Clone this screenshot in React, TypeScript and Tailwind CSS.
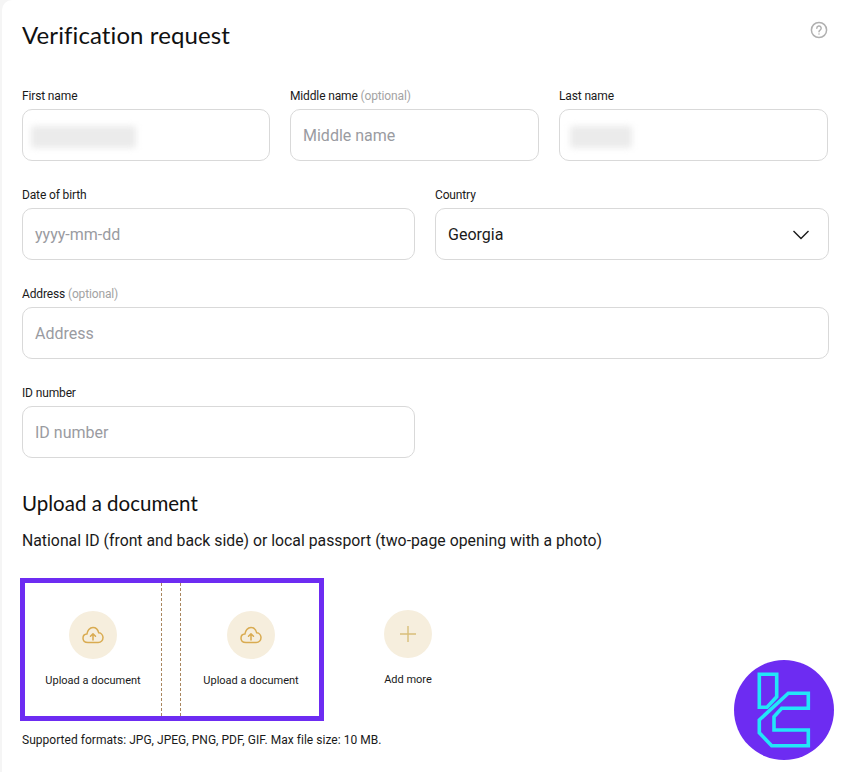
import React from "react";

const font = { fontFamily: "Roboto" };

function Label({ text, optional }: { text: string; optional?: boolean }) {
  return (
    <div className="h-[18px] text-[12px] leading-[18px] tracking-[-0.14px] text-[#1a1a1a] mb-[4px]">
      {text}
      {optional && <span className="text-[#a3a3a3]"> (optional)</span>}
    </div>
  );
}

function Field({ label, optional, placeholder, blur, shift = 0 }: { label: string; optional?: boolean; placeholder?: string; blur?: number; shift?: number }) {
  return (
    <div>
      <Label text={label} optional={optional} />
      <div className="h-[52px] rounded-[10px] border border-[#d9d9d9] bg-white flex items-center px-[12px] text-[16px] leading-[24px] pt-[1px] text-[#9a9ba1]">
        {placeholder}
        {blur && (
          <div className="mt-[3px] h-[22px] rounded-[2px] bg-[#ebebeb] blur-[3px]" style={{ width: blur, marginLeft: shift }} />
        )}
      </div>
    </div>
  );
}

function CloudIcon() {
  return (
    <svg width="24" height="24" viewBox="0 0 24 24" fill="none" stroke="#d9ab50" strokeWidth="1.5" strokeLinecap="round" strokeLinejoin="round">
      <path d="M7 19.5C3.9 19.5 2 17.6 2 15.2c0-2.3 1.7-4 3.9-4.1C6.3 7.8 8.7 4.5 12 4.5c2.8 0 5 2.3 5.7 5.3 2.6.2 4.3 2.4 4.3 4.8 0 2.7-2 4.9-4.8 4.9Z" />
      <path d="M12 17v-6M9.5 13.2 12 10.7l2.5 2.5" />
    </svg>
  );
}

function Upload() {
  return (
    <div className="flex flex-col items-center">
      <div className="w-[48px] h-[48px] rounded-full bg-[#f6eedd] flex items-center justify-center">
        <CloudIcon />
      </div>
      <div className="mt-[14px] text-[11px] leading-[16px] text-[#1a1a1a]">Upload a document</div>
    </div>
  );
}

export default function App() {
  return (
    <div className="w-[847px] h-[772px] bg-[#f5f5f5] pl-[2px] overflow-hidden relative" style={font}>
      <div className="h-[772px] bg-white rounded-tl-[10px] pl-[20px] pr-[18px] relative">
        <div className="flex justify-between pt-[17px] h-[87px]">
          <h1 className="text-[24px] leading-[36px] text-[#111] tracking-[0.1px]" style={{ fontFamily: "Lato" }}>Verification request</h1>
          <svg className="mt-[4px] mr-[1px]" width="18" height="18" viewBox="0 0 18 18" fill="none" stroke="#b0b0b0" strokeWidth="1.5" strokeLinecap="round">
            <circle cx="9" cy="9" r="7.6" />
            <path d="M6.8 7.2a2.2 2.2 0 1 1 3.3 1.9c-.7.4-1.1.8-1.1 1.6" />
            <path d="M9 13v.01" />
          </svg>
        </div>
        <div className="grid grid-cols-[248px_249px_269px] gap-x-[20px]">
          <Field label="First name" blur={105} shift={-4} />
          <Field label="Middle name" optional placeholder="Middle name" />
          <Field label="Last name" blur={62} shift={-2} />
        </div>
        <div className="grid grid-cols-[393px_394px] gap-x-[20px] mt-[25px]">
          <Field label="Date of birth" placeholder="yyyy-mm-dd" />
          <div>
            <Label text="Country" />
            <div className="h-[52px] rounded-[10px] border border-[#d9d9d9] flex items-center justify-between pl-[12px] pr-[18px] pt-[1px] text-[16px] text-[#1a1a1a]">
              Georgia
              <svg width="18" height="10" viewBox="0 0 18 10" fill="none" stroke="#1a1a1a" strokeWidth="1.4"><path d="M1.5 1 9 8.5 16.5 1" /></svg>
            </div>
          </div>
        </div>
        <div className="mt-[25px] w-[807px]">
          <Field label="Address" optional placeholder="Address" />
        </div>
        <div className="mt-[25px] w-[393px]">
          <Field label="ID number" placeholder="ID number" />
        </div>
        <h2 className="mt-[30px] text-[20.5px] leading-[30px] text-[#111]" style={{ fontFamily: "Lato" }}>Upload a document</h2>
        <p className="mt-[11px] text-[15.8px] leading-[24px] text-[#1a1a1a]">National ID (front and back side) or local passport (two-page opening with a photo)</p>
        <div className="mt-[25px] -ml-[2px] flex items-start">
          <div className="w-[304px] h-[143px] border-[5px] border-[#6d2cf2] flex">
            <div className="w-[137px] flex justify-center pt-[28px] border-r border-dashed border-[#a9865f]"><Upload /></div>
            <div className="w-[19px] border-r border-dashed border-[#a9865f]"></div>
            <div className="flex-1 flex justify-center pt-[28px] pl-[2px]"><Upload /></div>
          </div>
          <div className="ml-[60px] pt-[32px] flex flex-col items-center">
            <div className="w-[48px] h-[48px] rounded-full bg-[#f6eedd] flex items-center justify-center">
              <svg width="18" height="18" viewBox="0 0 18 18" stroke="#d9bf7a" strokeWidth="1.4"><path d="M9 1v16M1 9h16" /></svg>
            </div>
            <div className="mt-[14px] text-[11px] leading-[16px] text-[#1a1a1a]">Add more</div>
          </div>
        </div>
        <p className="mt-[11px] text-[12px] leading-[16px] tracking-[0.03px] text-[#1a1a1a]">Supported formats: JPG, JPEG, PNG, PDF, GIF. Max file size: 10 MB.</p>
      </div>
      <svg className="absolute left-[734px] top-[660px]" width="100" height="100" viewBox="0 0 100 100">
        <circle cx="50" cy="50" r="50" fill="#6d2cf2" />
        <g fill="none" stroke="#22e6f8" strokeWidth="3.6" strokeLinejoin="miter">
          <path d="M25.3 14.3H42.7V36.7L33 47.3H25.3Z" />
          <path d="M54.3 33.3H74.3V48.3H47.7L40 56.7V70H74.3V85.7H37.7L25.3 72.7V60Z" />
        </g>
      </svg>
    </div>
  );
}
